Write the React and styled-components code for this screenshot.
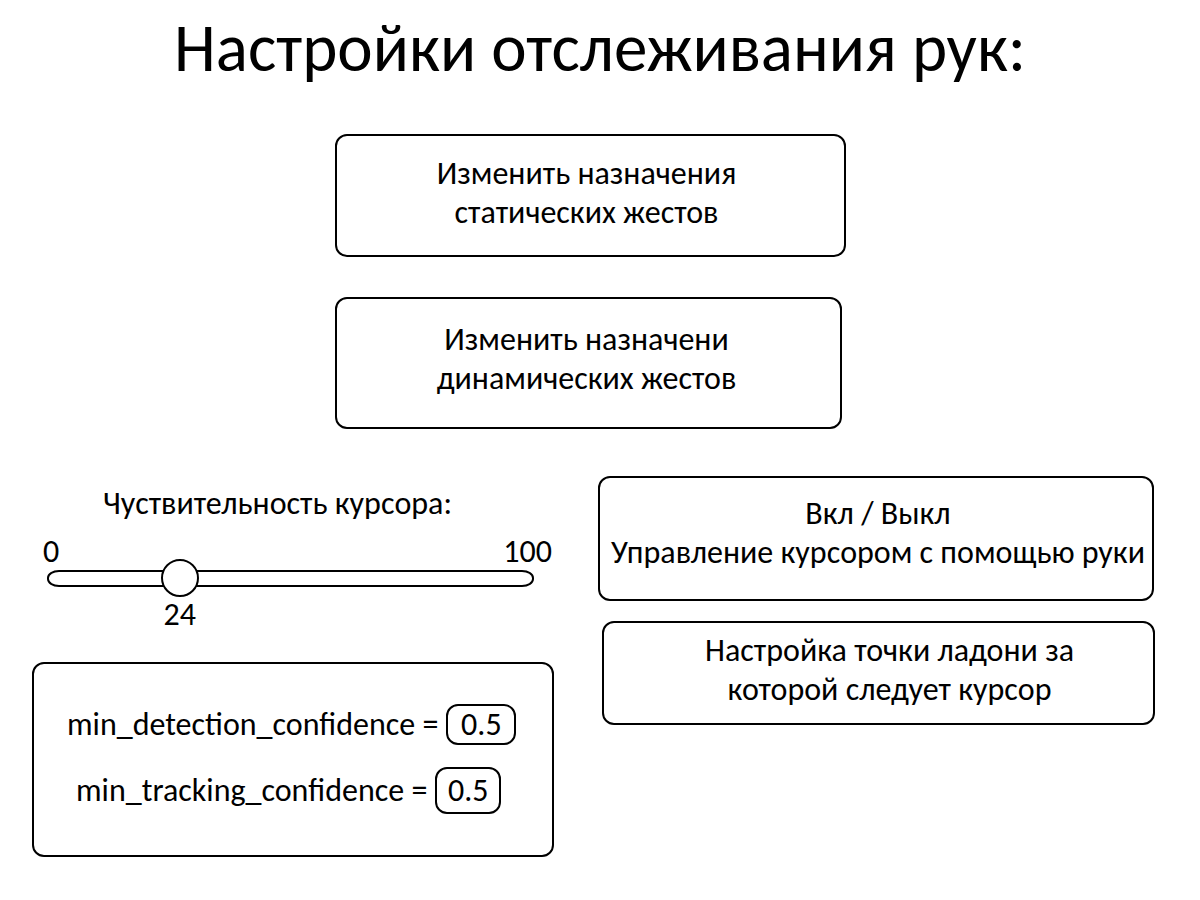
import React, { useState } from "react";
import styled, { createGlobalStyle } from "styled-components";

const GlobalStyle = createGlobalStyle`
  *, *::before, *::after { box-sizing: border-box; }
  body {
    margin: 0;
    background: #fff;
    color: #000;
    font-family: Carlito, Calibri, "Noto Sans", sans-serif;
    font-size: 32px;
    line-height: 39px;
  }
  button, input { font: inherit; color: inherit; }
`;

const Page = styled.main`
  padding-bottom: 40px;
`;

const Title = styled.h1`
  margin: 0;
  padding-top: 6px;
  font-size: 67px;
  font-weight: 400;
  line-height: 84px;
  text-align: center;
`;

const Gestures = styled.section`
  display: grid;
  grid-template-columns: 335fr 511fr 354fr;
  row-gap: 40px;
  padding-top: 44px;
  > * { grid-column: 2; }
`;

const ActionButton = styled.button`
  display: flex;
  flex-direction: column;
  align-items: center;
  justify-content: flex-start;
  min-height: ${(p) => p.$height}px;
  padding: ${(p) => p.$pad};
  margin: ${(p) => p.$margin || "0"};
  background: #fff;
  border: 2px solid #000;
  border-radius: 12px;
  text-align: center;
  white-space: nowrap;
  cursor: pointer;
`;

const Columns = styled.div`
  display: grid;
  grid-template-columns: 522fr 557fr;
  column-gap: 44px;
  align-items: start;
  padding: 47px 45px 0 32px;
`;

const Column = styled.section`
  display: flex;
  flex-direction: column;
  gap: ${(p) => p.$gap}px;
`;

const Sensitivity = styled.div`
  display: flex;
  flex-direction: column;
  padding: 8px 2px 0 11px;
`;

const SliderLabel = styled.label`
  padding-right: 40px;
  text-align: center;
`;

const Scale = styled.div`
  display: flex;
  justify-content: space-between;
  padding-top: 9px;
`;

const Track = styled.div`
  display: flex;
  align-items: center;
  height: 17px;
  margin: -1px 18px 0 4px;
  padding-left: 6px;
  border: 2px solid #000;
  border-radius: 12px / 8px;
`;

const Range = styled.input`
  appearance: none;
  flex: 1;
  min-width: 0;
  height: 38px;
  margin: 0 -2px 2px 0;
  background: transparent;
  cursor: pointer;
  &::-webkit-slider-thumb {
    appearance: none;
    width: 38px;
    height: 38px;
    background: #fff;
    border: 2px solid #000;
    border-radius: 50%;
  }
  &::-moz-range-thumb {
    width: 34px;
    height: 34px;
    background: #fff;
    border: 2px solid #000;
    border-radius: 50%;
  }
`;

const ValueRow = styled.div`
  display: flex;
  margin: 8px 18px 0 12px;
`;

const Value = styled.output`
  width: 38px;
  text-align: center;
`;

const Panel = styled.form`
  display: flex;
  flex-direction: column;
  gap: 22px;
  min-height: 195px;
  padding: 40px 8px 40px 33px;
  border: 2px solid #000;
  border-radius: 12px;
`;

const Field = styled.div`
  display: flex;
  align-items: center;
  gap: 8px;
  padding-left: ${(p) => p.$indent}px;
  white-space: nowrap;
`;

const NumberBox = styled.input`
  width: ${(p) => p.$width}px;
  height: ${(p) => p.$height}px;
  padding: 0;
  background: #fff;
  border: 2px solid #000;
  border-radius: 12px;
  text-align: center;
`;

export default function App() {
  const [sensitivity, setSensitivity] = useState(24);
  const share = sensitivity / 100;

  return (
    <>
      <GlobalStyle />
      <Page>
        <Title>Настройки отслеживания рук:</Title>
        <Gestures>
          <ActionButton type="button" $height={123} $pad="18px 8px 0 0">
            <span>Изменить назначения</span>
            <span>статических жестов</span>
          </ActionButton>
          <ActionButton type="button" $height={132} $pad="21px 4px 0 0" $margin="0 4px 0 0">
            <span>Изменить назначени</span>
            <span>динамических жестов</span>
          </ActionButton>
        </Gestures>
        <Columns>
          <Column $gap={28}>
            <Sensitivity>
              <SliderLabel htmlFor="sensitivity">Чуствительность курсора:</SliderLabel>
              <Scale>
                <span>0</span>
                <span>100</span>
              </Scale>
              <Track>
                <Range
                  id="sensitivity"
                  type="range"
                  min="0"
                  max="100"
                  value={sensitivity}
                  onChange={(e) => setSensitivity(Number(e.target.value))}
                />
              </Track>
              <ValueRow>
                <Value htmlFor="sensitivity" style={{ marginLeft: `calc((100% - 38px) * ${share})` }}>
                  {sensitivity}
                </Value>
              </ValueRow>
            </Sensitivity>
            <Panel>
              <Field $indent={0}>
                <label htmlFor="detection">min_detection_confidence =</label>
                <NumberBox id="detection" type="text" inputMode="decimal" defaultValue="0.5" $width={70} $height={41} />
              </Field>
              <Field $indent={9}>
                <label htmlFor="tracking">min_tracking_confidence =</label>
                <NumberBox id="tracking" type="text" inputMode="decimal" defaultValue="0.5" $width={66} $height={47} />
              </Field>
            </Panel>
          </Column>
          <Column $gap={20}>
            <ActionButton type="button" $height={125} $pad="16px 0 0 4px" $margin="0 1px 0 0">
              <span>Вкл / Выкл</span>
              <span>Управление курсором с помощью руки</span>
            </ActionButton>
            <ActionButton type="button" $height={104} $pad="8px 0 0 22px" $margin="0 0 0 4px">
              <span>Настройка точки ладони за</span>
              <span>которой следует курсор</span>
            </ActionButton>
          </Column>
        </Columns>
      </Page>
    </>
  );
}
